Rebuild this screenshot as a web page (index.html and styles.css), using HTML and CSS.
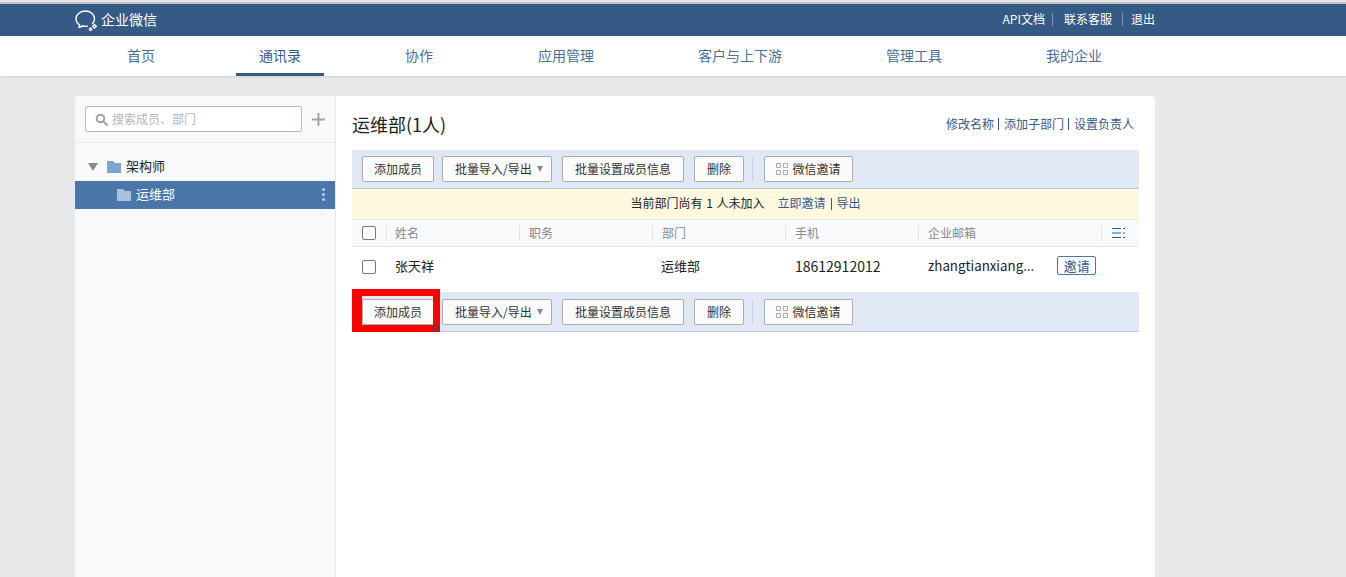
FILE: index.html
```html
<!DOCTYPE html>
<html lang="zh-CN">
<head>
    <meta charset="UTF-8">
    <meta name="viewport" content="width=device-width, initial-scale=1.0">
    <title>企业微信</title>
    <link rel="stylesheet" href="styles.css">
</head>
<body>
    <div class="topline"></div>
    <header class="topbar">
        <div class="logo">
            <svg class="logo-icon" width="24" height="22" viewBox="0 0 24 22" fill="none" stroke="#fff" stroke-width="1.400" stroke-linecap="round" stroke-linejoin="round">
                <path d="M17.500 13.500c1.300-1.300 2-2.900 2-4.700C19.500 4.500 15.500 1 10.500 1S1 4.500 1 8.800c0 2.500 1.400 4.700 3.500 6.100L4 17.500l3.300-1.500c1 .3 2 .4 3.200.4.600 0 1.300 0 1.900-.2"/>
                <path d="M19.500 14.500l1.800 1.800-1.800 1.800-1.800-1.800z"/>
                <path d="M15.500 18l1.200 1.300-1.200 1.300-1.200-1.300z"/>
            </svg>
            <span>企业微信</span>
        </div>
        <div class="toplinks">
            <a class="toplink">API文档</a><i class="topsep"></i>
            <a class="toplink">联系客服</a><i class="topsep topsep-last"></i>
            <a class="toplink">退出</a>
        </div>
    </header>
    <nav class="nav">
        <a class="nav-item">首页</a>
        <a class="nav-item active">通讯录</a>
        <a class="nav-item">协作</a>
        <a class="nav-item nav-item-wide">应用管理</a>
        <a class="nav-item">客户与上下游</a>
        <a class="nav-item">管理工具</a>
        <a class="nav-item">我的企业</a>
    </nav>

    <div class="card">
        <aside class="sidebar">
            <div class="search-row">
                <div class="search">
                    <svg width="13" height="13" viewBox="0 0 13 13" fill="none" stroke="#a3a3a3" stroke-width="2">
                        <circle cx="5.500" cy="5.500" r="3.800"/>
                        <path d="M8.300 8.300l3.700 3.700" stroke-linecap="round"/>
                    </svg>
                    <span>搜索成员、部门</span>
                </div>
                <svg class="plus" width="13" height="13" viewBox="0 0 13 13" stroke="#a3a3a3" stroke-width="2">
                    <path d="M6.500 0v13M0 6.500h13"/>
                </svg>
            </div>
            <div class="tree">
                <div class="tree-row">
                    <i class="caret"></i>
                    <svg class="folder" width="14" height="12" viewBox="0 0 14 12" fill="#7fa3cf"><path d="M0 0h6l2 2h6v10H0z"/></svg>
                    <span>架构师</span>
                </div>
                <div class="tree-row selected">
                    <svg class="folder" width="14" height="12" viewBox="0 0 14 12" fill="#a9bfdb"><path d="M0 0h6l2 2h6v10H0z"/></svg>
                    <span>运维部</span>
                    <div class="dots"><i></i><i></i><i></i></div>
                </div>
            </div>
        </aside>

        <main class="main">
            <div class="title-row">
                <h2>运维部(1人)</h2>
                <div class="title-links">
                    <a>修改名称</a><i></i><a>添加子部门</a><i></i><a>设置负责人</a>
                </div>
            </div>

            <div class="toolbar">
                <button class="btn">添加成员</button>
                <button class="btn btn-menu">批量导入/导出<i class="btn-caret"></i></button>
                <button class="btn btn-wide">批量设置成员信息</button>
                <button class="btn btn-small">删除</button>
                <i class="tool-sep"></i>
                <button class="btn btn-qr">
                    <svg width="12" height="12" viewBox="0 0 12 12" fill="none" stroke="#aaa"><path d="M.5.500h4v4h-4zM7.500.500h4v4h-4zM.5 7.500h4v4h-4zM7.500 7.500h4v4h-4z"/></svg>
                    微信邀请
                </button>
            </div>

            <div class="notice">当前部门尚有 1 人未加入<a class="notice-link first">立即邀请</a><i></i><a class="notice-link">导出</a></div>

            <div class="table-head">
                <div class="cell-check"><i class="checkbox"></i></div>
                <div class="th th-first">姓名</div>
                <div class="th">职务</div>
                <div class="th">部门</div>
                <div class="th">手机</div>
                <div class="th th-mail">企业邮箱</div>
                <div class="th th-menu">
                    <svg width="13" height="10" viewBox="0 0 13 10" stroke="#2e5a8c"><path d="M0 .5h9M0 5h9M0 9.500h9M11 .5h2M11 5h2M11 9.500h2"/></svg>
                </div>
            </div>
            <div class="table-row">
                <div class="cell-check"><i class="checkbox"></i></div>
                <div class="td">张天祥</div>
                <div class="td"></div>
                <div class="td">运维部</div>
                <div class="td td-phone">18612912012</div>
                <div class="td td-mail">
                    <span>zhangtianxiang...</span>
                    <button class="invite">邀请</button>
                </div>
            </div>

            <div class="toolbar toolbar-bottom">
                <button class="btn">添加成员</button>
                <button class="btn btn-menu">批量导入/导出<i class="btn-caret"></i></button>
                <button class="btn btn-wide">批量设置成员信息</button>
                <button class="btn btn-small">删除</button>
                <i class="tool-sep"></i>
                <button class="btn btn-qr">
                    <svg width="12" height="12" viewBox="0 0 12 12" fill="none" stroke="#aaa"><path d="M.5.500h4v4h-4zM7.500.500h4v4h-4zM.5 7.500h4v4h-4zM7.500 7.500h4v4h-4z"/></svg>
                    微信邀请
                </button>
                <div class="red-mark"><i class="red-handle"></i></div>
            </div>
        </main>
    </div>
</body>
</html>
```

FILE: styles.css
```css
* {
    margin: 0;
    padding: 0;
    box-sizing: border-box;
}

html, body {
    height: 100%;
    overflow: hidden;
}

body {
    font-family: "Noto Sans CJK SC", "Noto Sans", sans-serif;
    font-size: 12px;
    color: #222;
    background: #e7e8ea;
    display: flex;
    flex-direction: column;
}

i {
    font-style: normal;
}

/* top bar */
.topline {
    height: 4px;
    flex-shrink: 0;
    background: #c2c2c2;
    border-top: 2px solid #e4e4e4;
}

.topbar {
    height: 32px;
    flex-shrink: 0;
    background: #355a85;
    color: #fff;
    display: flex;
    align-items: center;
    justify-content: space-between;
    padding: 0 191px 2px 75px;
}

.logo {
    display: flex;
    align-items: center;
    gap: 2px;
    font-size: 14px;
}

.logo span {
    margin-top: -1px;
}

.logo-icon {
    margin-top: 3px;
}

.toplinks {
    display: flex;
    align-items: center;
}

.toplink {
    line-height: 16px;
}

.topsep {
    width: 1px;
    height: 13px;
    background: #7d97b5;
    margin: 0 11px 0 7px;
}

.topsep-last {
    margin: 0 8px 0 10px;
}

/* nav */
.nav {
    height: 40px;
    flex-shrink: 0;
    background: #fff;
    display: flex;
    padding-left: 75px;
    box-shadow: 0 1px 2px rgba(0, 0, 0, 0.1);
}

.nav-item {
    margin: 0 29px;
    padding: 0 23px;
    font-size: 14px;
    line-height: 38px;
    color: #4d6f97;
    border-bottom: 3px solid transparent;
}

.nav-item-wide {
    margin-left: 30px;
}

.nav-item.active {
    color: #355a85;
    border-bottom-color: #355a85;
}

/* card */
.card {
    flex: 1;
    width: 1080px;
    margin: 20px 0 0 75px;
    background: #fff;
    border-radius: 4px 4px 0 0;
    display: flex;
    overflow: hidden;
}

.sidebar {
    width: 261px;
    flex-shrink: 0;
    background: #f8f9fb;
    border-right: 1px solid #e6e8ec;
}

.search-row {
    height: 47px;
    display: flex;
    align-items: center;
    padding: 0 10px;
    border-bottom: 1px solid #e6e8ec;
}

.search {
    width: 218px;
    height: 26px;
    background: #fff;
    border: 1px solid #b4bcc8;
    border-radius: 2px;
    display: flex;
    align-items: center;
    gap: 4px;
    padding-left: 9px;
    color: #b5b5b5;
}

.search span {
    margin-top: -2px;
}

.plus {
    margin-left: 10px;
}

.tree {
    padding-top: 10px;
}

.tree-row {
    height: 28px;
    display: flex;
    align-items: center;
    padding-left: 13px;
    font-size: 13px;
}

.tree-row span {
    margin-top: -3px;
}

.caret {
    width: 0;
    height: 0;
    border: 5px solid transparent;
    border-top: 8px solid #8a8a8a;
    border-bottom: 0;
    margin-right: 9px;
}

.folder {
    margin-right: 5px;
}

.tree-row.selected {
    background: #4a76aa;
    color: #fff;
    padding-left: 42px;
    position: relative;
    width: 260px;
}

.dots {
    position: absolute;
    right: 10px;
    top: 7px;
    display: flex;
    flex-direction: column;
    gap: 2px;
}

.dots i {
    width: 3px;
    height: 3px;
    border-radius: 50%;
    background: #b9cbe1;
}

/* main */
.main {
    flex: 1;
    padding: 0 16px;
}

.title-row {
    height: 54px;
    display: flex;
    justify-content: space-between;
    align-items: center;
    padding-right: 5px;
}

.title-row h2 {
    font-size: 18px;
    font-weight: 400;
    color: #222;
    padding-top: 1px;
}

.title-links {
    display: flex;
    align-items: center;
    color: #355a85;
    margin-top: 1px;
}

.title-links i {
    width: 1px;
    height: 12px;
    background: #355a85;
    margin: 0 5px 0 4px;
}

.toolbar {
    height: 39px;
    background: #dfe8f4;
    border-bottom: 1px solid #bcc8d8;
    display: flex;
    align-items: center;
    padding-left: 10px;
    position: relative;
}

.toolbar-bottom {
    height: 40px;
    padding-top: 1px;
}

.btn {
    height: 26px;
    width: 72px;
    margin-right: 8px;
    padding-bottom: 2px;
    font: inherit;
    color: #333;
    background: #fbfbfb;
    border: 1px solid #adadad;
    border-radius: 2px;
}

.btn-menu {
    width: 110px;
    margin-right: 10px;
    display: flex;
    align-items: center;
    padding-left: 12px;
}

.btn-caret {
    width: 0;
    height: 0;
    border: 3.5px solid transparent;
    border-top: 6px solid #8a8a8a;
    border-bottom: 0;
    margin: 2px 0 0 5px;
}

.btn-wide {
    width: 122px;
    margin-right: 10px;
}

.btn-small {
    width: 50px;
}

.btn-qr {
    width: 89px;
    margin: 0;
    display: flex;
    align-items: center;
    justify-content: center;
    gap: 4px;
}

.btn-qr svg {
    margin-top: 2px;
}

.tool-sep {
    width: 1px;
    height: 24px;
    background: #c8d1dc;
    margin-right: 11px;
}

.notice {
    height: 31px;
    background: #fff9e0;
    border-bottom: 1px solid #e8e9ea;
    display: flex;
    align-items: center;
    justify-content: center;
    padding-bottom: 3px;
    word-spacing: 1px;
}

.notice i {
    width: 1px;
    height: 12px;
    background: #355a85;
    margin: 2px 5px 0;
}

.notice-link {
    color: #355a85;
}

.notice-link.first {
    margin-left: 13px;
}

.table-head,
.table-row {
    display: grid;
    grid-template-columns: 34px 133px 133px 133px 133px 183px 38px;
    align-items: center;
}

.table-head {
    height: 27px;
    background: #f9fafc;
    border-bottom: 1px solid #e4e6ea;
    color: #888;
}

.table-row {
    height: 45px;
    padding-bottom: 6px;
    font-size: 13px;
    color: #222;
}

.cell-check {
    padding-left: 10px;
    display: flex;
}

.checkbox {
    width: 14px;
    height: 14px;
    background: #fff;
    border: 1px solid #777;
    border-radius: 2px;
}

.th {
    height: 16px;
    line-height: 16px;
    padding-left: 9px;
    border-left: 1px solid #e2e4e8;
}

.th-first {
    padding-left: 8px;
}

.th-menu {
    padding-left: 10px;
}

.td {
    padding-left: 9px;
    white-space: nowrap;
    margin-top: -2px;
}

.td-phone {
    font-size: 14px;
    padding-left: 10px;
}

.td-mail {
    display: flex;
    align-items: center;
    gap: 23px;
    padding-left: 10px;
    font-size: 13.300px;
}

.invite {
    width: 39px;
    height: 19px;
    padding-bottom: 1px;
    font: inherit;
    font-size: 13px;
    line-height: 15px;
    color: #355a85;
    background: #fff;
    border: 1px solid #4a76aa;
    border-radius: 2px;
}

/* red annotation drawn over the screenshot */
.red-mark {
    position: absolute;
    left: 0;
    top: -3px;
    width: 88px;
    height: 43px;
    border: 7px solid #f00;
    border-left-width: 10px;
}

.red-handle {
    position: absolute;
    right: -6px;
    bottom: -7px;
    width: 7px;
    height: 7px;
    border-radius: 50%;
    border: 1px solid #0a5a68;
}
```
